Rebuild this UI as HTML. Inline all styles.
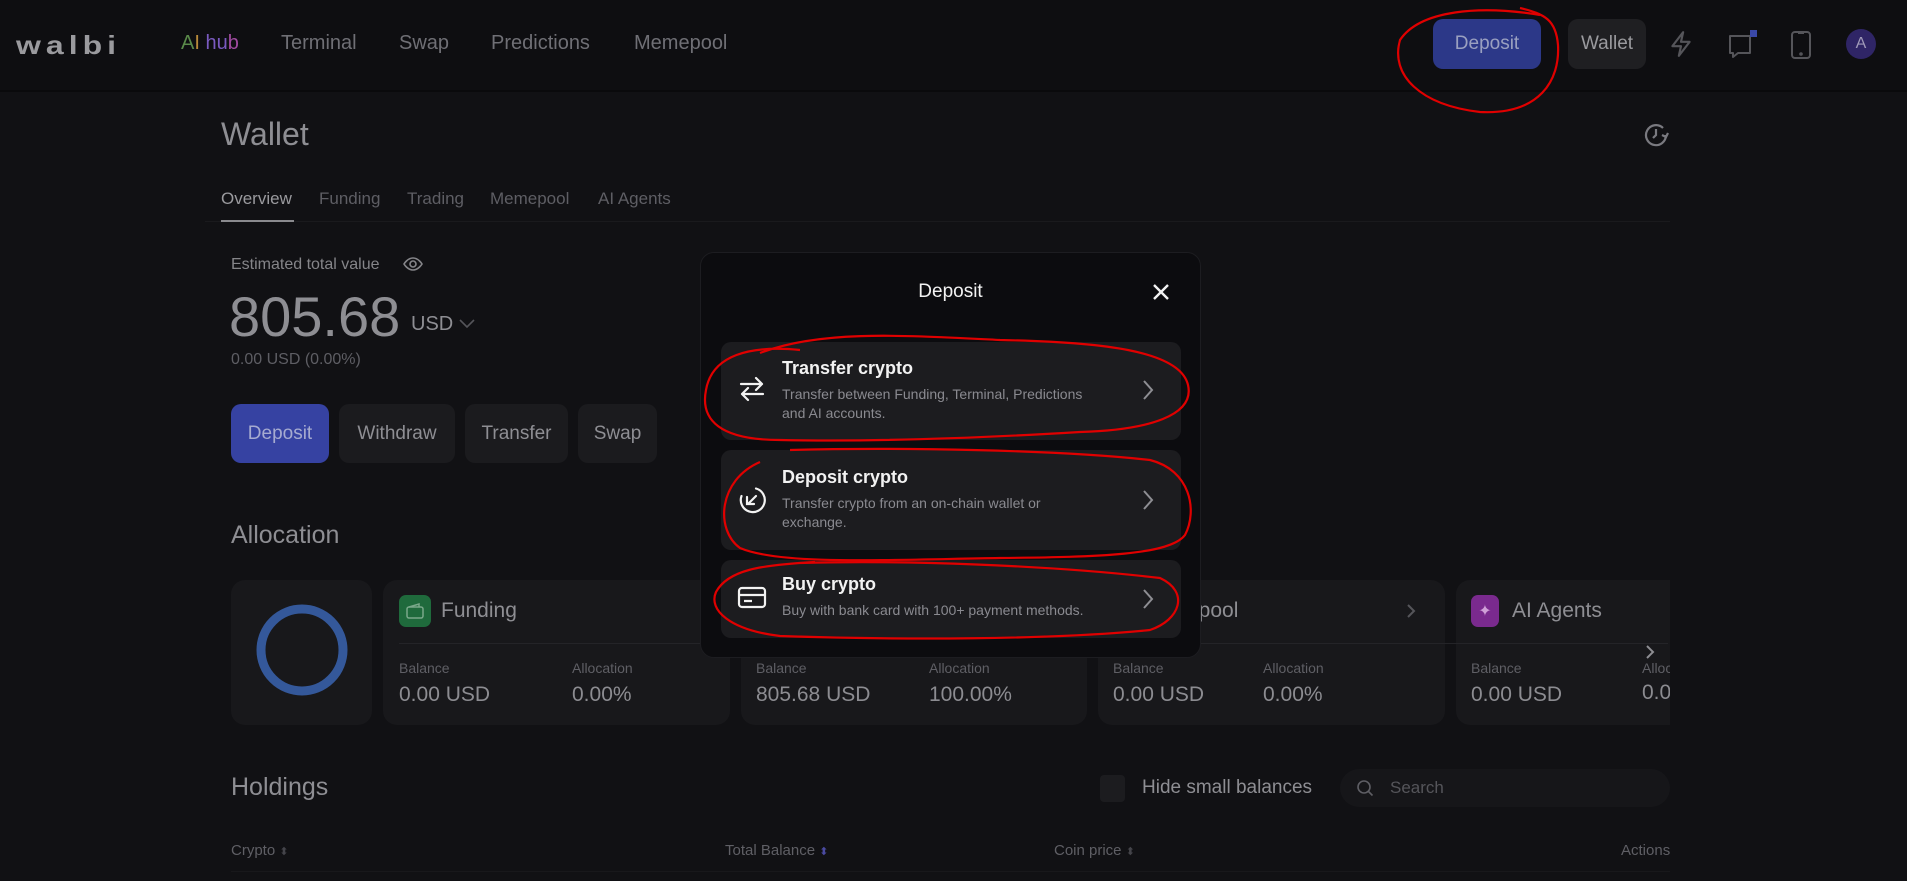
<!DOCTYPE html>
<html><head><meta charset="utf-8"><style>
*{margin:0;padding:0;box-sizing:border-box}
body{width:1907px;height:881px;background:#111114;font-family:"Liberation Sans",sans-serif;color:#8c8c91;position:relative;overflow:hidden}
.a{position:absolute;white-space:nowrap}
.hdr{position:absolute;left:0;top:0;width:1907px;height:92px;background:#0e0e11;border-bottom:2px solid #0a0a0c}
.nav{font-size:20px;color:#6f6f75;top:32px}
.btn{position:absolute;border-radius:10px;background:#1b1b1e;font-size:19px;color:#8e8e93;display:flex;align-items:center;justify-content:center}
.card{position:absolute;top:580px;height:145px;background:#18181b;border-radius:14px}
.lbl{font-size:14px;color:#5f5f65}
.val{font-size:21px;color:#8c8c91}
.modal{position:absolute;left:700px;top:252px;width:501px;height:406px;background:#0c0c0f;border:1px solid #1d1d21;border-radius:14px}
.item{position:absolute;left:20px;width:460px;background:#1c1c1f;border-radius:10px}
.it{position:absolute;left:61px;font-size:18px;font-weight:bold;color:#f2f2f2;white-space:nowrap}
.id{position:absolute;left:61px;font-size:14px;color:#8a8a90;line-height:19px;white-space:nowrap}
.chev{position:absolute;right:26px}
</style></head><body>
<div class="hdr"></div>
<div class="a" style="left:16px;top:27px;font-size:32px;font-weight:bold;color:#9a9a9e;letter-spacing:5px;transform:scaleY(0.8)">walbi</div>
<div class="a nav" style="left:181px"><span style="color:#5a8a4a">A</span><span style="color:#b88a3a">I</span> <span style="color:#7a5ac0">hu</span><span style="color:#a04aa0">b</span></div>
<div class="a nav" style="left:281px">Terminal</div>
<div class="a nav" style="left:399px">Swap</div>
<div class="a nav" style="left:491px">Predictions</div>
<div class="a nav" style="left:634px">Memepool</div>
<div class="btn" style="left:1433px;top:19px;width:108px;height:50px;background:#2c3888;color:#9aa0c0">Deposit</div>
<div class="btn" style="left:1568px;top:19px;width:78px;height:50px;background:#1f1f22;color:#9a9a9e">Wallet</div>
<svg class="a" style="left:1668px;top:30px" width="26" height="28" viewBox="0 0 24 26" fill="none" stroke="#55555a" stroke-width="2" stroke-linejoin="round"><path d="M14 2 4 15h8l-2 9 10-13h-8z"/></svg>
<svg class="a" style="left:1726px;top:28px" width="34" height="34" viewBox="0 0 34 34" fill="none" stroke="#55555a" stroke-width="2"><path d="M4 8h20v17H12l-5 4v-4H4z" stroke-linejoin="round"/><rect x="24" y="2" width="7" height="7" fill="#3a48a8" stroke="none"/></svg>
<svg class="a" style="left:1790px;top:30px" width="22" height="30" viewBox="0 0 22 30" fill="none" stroke="#55555a" stroke-width="2"><rect x="2" y="2" width="18" height="26" rx="3"/><path d="M8 3h6"/><circle cx="11" cy="24" r="0.8"/></svg>
<div class="a" style="left:1846px;top:29px;width:30px;height:30px;border-radius:50%;background:#2f2566;color:#a09ab8;font-size:16px;display:flex;align-items:center;justify-content:center">A</div>

<div class="a" style="left:221px;top:116px;font-size:32px;color:#8e8e93">Wallet</div>
<svg class="a" style="left:1643px;top:121px" width="28" height="28" viewBox="0 0 28 28" fill="none" stroke="#7a7a80" stroke-width="2.2"><path d="M23 14a10 10 0 1 1-3-7"/><path d="M13 8v6l-3 3"/><path d="M19 14l4 2 2-4"/></svg>
<div class="a" style="left:221px;top:189px;font-size:17px;color:#9a9a9e">Overview</div>
<div class="a" style="left:319px;top:189px;font-size:17px;color:#5e5e64">Funding</div>
<div class="a" style="left:407px;top:189px;font-size:17px;color:#5e5e64">Trading</div>
<div class="a" style="left:490px;top:189px;font-size:17px;color:#5e5e64">Memepool</div>
<div class="a" style="left:598px;top:189px;font-size:17px;color:#5e5e64">AI Agents</div>
<div class="a" style="left:205px;top:221px;width:1465px;height:1px;background:#1a1a1d"></div>
<div class="a" style="left:221px;top:220px;width:73px;height:2px;background:#8a8a8e"></div>

<div class="a" style="left:231px;top:256px;font-size:16px;color:#858589">Estimated total value</div>
<svg class="a" style="left:403px;top:256px" width="20" height="16" viewBox="0 0 20 16" fill="none" stroke="#858589" stroke-width="1.6"><path d="M1 8s3.5-6 9-6 9 6 9 6-3.5 6-9 6-9-6-9-6z"/><circle cx="10" cy="8" r="3"/></svg>
<div class="a" style="left:229px;top:284px;font-size:56px;color:#8e8e93">805.68</div>
<div class="a" style="left:411px;top:313px;font-size:20px;color:#8e8e93">USD</div>
<svg class="a" style="left:458px;top:318px" width="18" height="12" viewBox="0 0 18 12" fill="none" stroke="#55555a" stroke-width="1.6"><path d="M2 2l7 7 7-7"/></svg>
<div class="a" style="left:231px;top:351px;font-size:16px;color:#5e5e64">0.00 USD (0.00%)</div>
<div class="btn" style="left:231px;top:404px;width:98px;height:59px;background:#3642a2;color:#a6abd0">Deposit</div>
<div class="btn" style="left:339px;top:404px;width:116px;height:59px">Withdraw</div>
<div class="btn" style="left:465px;top:404px;width:103px;height:59px">Transfer</div>
<div class="btn" style="left:578px;top:404px;width:79px;height:59px">Swap</div>

<div class="a" style="left:231px;top:521px;font-size:25px;color:#8e8e93">Allocation</div>
<div class="card" style="left:231px;width:141px"></div>
<svg class="a" style="left:256px;top:604px" width="92" height="92"><circle cx="46" cy="46" r="41" fill="none" stroke="#34589a" stroke-width="9"/></svg>

<div class="card" style="left:383px;width:347px"></div>
<div class="a" style="left:399px;top:595px;width:32px;height:32px;border-radius:7px;background:#1f6a3c"></div>
<svg class="a" style="left:405px;top:602px" width="20" height="18" viewBox="0 0 20 18" fill="none" stroke="#7aa88a" stroke-width="1.5"><rect x="2" y="5" width="16" height="11" rx="2"/><path d="M4 5l10-3v3"/></svg>
<div class="a" style="left:441px;top:599px;font-size:21px;color:#8e8e93">Funding</div>
<div class="a" style="left:399px;top:643px;width:315px;height:1px;background:#242428"></div>
<div class="a lbl" style="left:399px;top:660px">Balance</div><div class="a val" style="left:399px;top:683px">0.00 USD</div>
<div class="a lbl" style="left:572px;top:660px">Allocation</div><div class="a val" style="left:572px;top:683px">0.00%</div>

<div class="card" style="left:741px;width:346px"></div>
<div class="a lbl" style="left:756px;top:660px">Balance</div><div class="a val" style="left:756px;top:683px">805.68 USD</div>
<div class="a lbl" style="left:929px;top:660px">Allocation</div><div class="a val" style="left:929px;top:683px">100.00%</div>

<div class="card" style="left:1098px;width:347px"></div>
<div class="a" style="left:1187px;top:599px;font-size:21px;color:#8e8e93">epool</div>
<svg class="a" style="left:1405px;top:602px" width="12" height="18" viewBox="0 0 12 18" fill="none" stroke="#55555a" stroke-width="2"><path d="M3 3l6 6-6 6"/></svg>
<div class="a" style="left:1110px;top:643px;width:320px;height:1px;background:#242428"></div>
<div class="a lbl" style="left:1113px;top:660px">Balance</div><div class="a val" style="left:1113px;top:683px">0.00 USD</div>
<div class="a lbl" style="left:1263px;top:660px">Allocation</div><div class="a val" style="left:1263px;top:683px">0.00%</div>

<div class="card" style="left:1456px;width:214px;border-radius:14px 0 0 14px"></div>
<div class="a" style="left:1471px;top:595px;width:28px;height:32px;border-radius:7px;background:#7a2a8e;color:#d0a0d8;font-size:16px;display:flex;align-items:center;justify-content:center">✦</div>
<div class="a" style="left:1512px;top:599px;font-size:21px;color:#8e8e93">AI Agents</div>
<div class="a" style="left:1423px;top:643px;width:245px;height:1px;background:#242428"></div>
<svg class="a" style="left:1644px;top:643px" width="12" height="18" viewBox="0 0 12 18" fill="none" stroke="#8e8e93" stroke-width="2"><path d="M3 3l6 6-6 6"/></svg>
<div class="a lbl" style="left:1471px;top:660px">Balance</div><div class="a val" style="left:1471px;top:683px">0.00 USD</div>
<div class="a" style="left:1642px;top:660px;width:28px;overflow:hidden"><div class="lbl">Allocation</div><div class="val" style="margin-top:5px">0.00%</div></div>

<div class="a" style="left:231px;top:773px;font-size:25px;color:#8e8e93">Holdings</div>
<div class="a" style="left:1100px;top:775px;width:25px;height:27px;border-radius:4px;background:#1c1c1f"></div>
<div class="a" style="left:1142px;top:777px;font-size:19px;color:#8e8e93">Hide small balances</div>
<div class="a" style="left:1340px;top:769px;width:330px;height:38px;border-radius:19px;background:#161619"></div>
<svg class="a" style="left:1356px;top:779px" width="18" height="18" viewBox="0 0 18 18" fill="none" stroke="#5e5e64" stroke-width="1.6"><circle cx="8" cy="8" r="6"/><path d="M12.5 12.5l4 4"/></svg>
<div class="a" style="left:1390px;top:778px;font-size:17px;color:#55555a">Search</div>
<div class="a lbl" style="left:231px;top:842px;font-size:15px">Crypto <span style="font-size:11px;color:#44444a">⬍</span></div>
<div class="a lbl" style="left:725px;top:842px;font-size:15px">Total Balance <span style="font-size:11px;color:#4a4aa0">⬍</span></div>
<div class="a lbl" style="left:1054px;top:842px;font-size:15px">Coin price <span style="font-size:11px;color:#44444a">⬍</span></div>
<div class="a lbl" style="left:1621px;top:842px;font-size:15px">Actions</div>
<div class="a" style="left:231px;top:871px;width:1439px;height:1px;background:#18181b"></div>

<div class="modal">
 <div class="a" style="left:0;width:499px;text-align:center;top:28px;font-size:19px;color:#f2f2f2">Deposit</div>
 <svg class="a" style="left:450px;top:29px" width="20" height="20" viewBox="0 0 20 20" stroke="#f2f2f2" stroke-width="2.4"><path d="M3 3l14 14M17 3L3 17"/></svg>
 <div class="item" style="top:89px;height:98px">
  <svg class="a" style="left:17px;top:34px" width="28" height="26" viewBox="0 0 28 26" fill="none" stroke="#f2f2f2" stroke-width="2.2" stroke-linecap="round" stroke-linejoin="round"><path d="M3 8h21M18 2l6 6-6 6"/><path d="M25 18H4M10 12l-6 6 6 6"/></svg>
  <div class="it" style="top:16px">Transfer crypto</div>
  <div class="id" style="top:43px">Transfer between Funding, Terminal, Predictions<br>and AI accounts.</div>
  <svg class="chev" style="top:36px" width="14" height="24" viewBox="0 0 14 24" fill="none" stroke="#8e8e93" stroke-width="2"><path d="M3 3l8 9-8 9"/></svg>
 </div>
 <div class="item" style="top:197px;height:100px">
  <svg class="a" style="left:16px;top:35px" width="30" height="30" viewBox="0 0 30 30" fill="none" stroke="#f2f2f2" stroke-width="2.2" stroke-linecap="round"><path d="M19 3.5A12 12 0 1 1 4.5 11"/><path d="M19 11l-8 8M10 12v7h7"/></svg>
  <div class="it" style="top:17px">Deposit crypto</div>
  <div class="id" style="top:44px">Transfer crypto from an on-chain wallet or<br>exchange.</div>
  <svg class="chev" style="top:38px" width="14" height="24" viewBox="0 0 14 24" fill="none" stroke="#8e8e93" stroke-width="2"><path d="M3 3l8 9-8 9"/></svg>
 </div>
 <div class="item" style="top:307px;height:78px">
  <svg class="a" style="left:16px;top:26px" width="30" height="24" viewBox="0 0 30 24" fill="none" stroke="#f2f2f2" stroke-width="2.2"><rect x="2" y="2" width="26" height="19" rx="3"/><path d="M2 9h26M7 15h8"/></svg>
  <div class="it" style="top:14px">Buy crypto</div>
  <div class="id" style="top:41px">Buy with bank card with 100+ payment methods.</div>
  <svg class="chev" style="top:27px" width="14" height="24" viewBox="0 0 14 24" fill="none" stroke="#8e8e93" stroke-width="2"><path d="M3 3l8 9-8 9"/></svg>
 </div>
</div>

<svg class="a" style="left:0;top:0" width="1907" height="881" fill="none" stroke="#e00000" stroke-width="2.2">
 <path d="M1540 15C1480 5 1420 10 1400 40C1390 75 1420 105 1480 112C1540 115 1560 80 1558 45C1556 20 1545 14 1520 8"/>
 <path d="M760 353C820 330 900 335 1000 340C1100 342 1180 350 1188 385C1195 415 1150 430 1080 432C980 438 880 442 780 440C720 440 700 420 706 390C712 355 750 345 800 350"/>
 <path d="M790 450C900 447 1060 450 1150 460C1190 470 1198 510 1185 535C1170 555 1100 557 1000 558C880 560 780 565 740 548C715 530 718 480 760 462"/>
 <path d="M800 563C900 560 1050 565 1160 578C1190 592 1180 620 1150 630C1050 640 900 640 780 636C730 630 708 610 716 592C728 570 760 565 815 562"/>
</svg>
</body></html>
